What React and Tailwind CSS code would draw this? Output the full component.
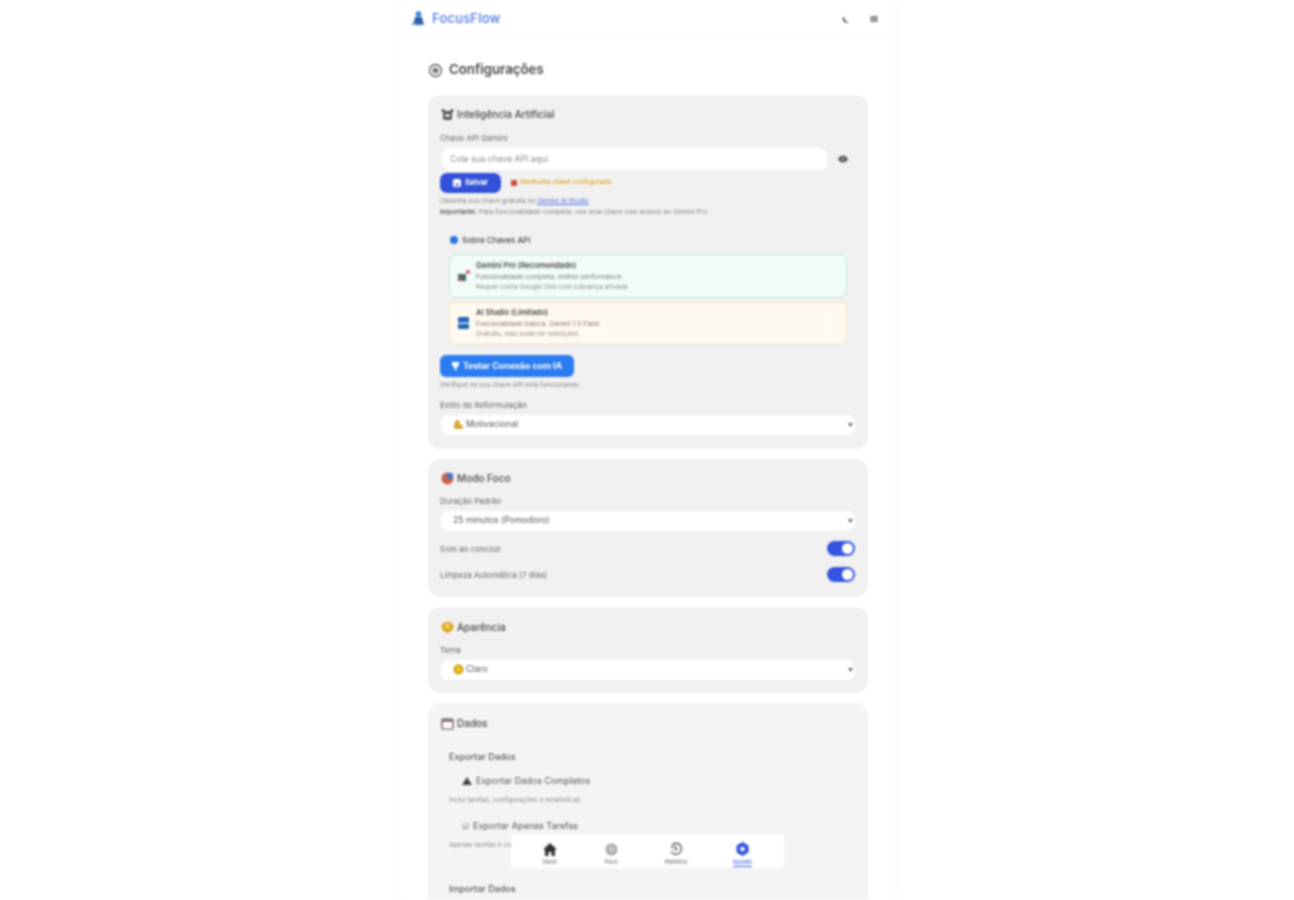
import React from "react";

const Section = ({ className = "", children }) => (
  <section className={`rounded-[12px] pr-[13px] pl-3 ${className}`}>{children}</section>
);

const Heading = ({ icon, children, className = "" }) => (
  <div className={`flex items-center gap-[3px] text-[10px] leading-[14px] font-medium text-[#444] ${className}`}>
    <span className="flex h-[14px] w-[14px] items-center justify-center">{icon}</span>
    {children}
  </div>
);

const Label = ({ children, className = "" }) => (
  <div className={`text-[8px] leading-[10px] text-[#666] ${className}`}>{children}</div>
);

const Select = ({ icon, children, className = "" }) => (
  <div className={`flex h-[20px] items-center justify-between rounded-[8px] bg-white pr-[2px] pl-[12px] text-[8.7px] text-[#555] ${className}`}>
    <span className="flex items-center gap-[2px]">{icon}{children}</span>
    <svg width="5" height="4" viewBox="0 0 5 4"><path d="M0 0h5L2.5 4z" fill="#666" /></svg>
  </div>
);

const Toggle = () => (
  <div className="flex h-[15px] w-[28px] items-center justify-end rounded-full bg-[#3353e0] pr-[2px]">
    <div className="h-[11px] w-[11px] rounded-full bg-white" />
  </div>
);

const InfoCard = ({ icon, title, line1, line2, className }) => (
  <div className={`flex items-center gap-[5px] rounded-[6px] border-[1.5px] pl-[7px] ${className}`}>
    <span className="flex h-[14px] w-[14px] items-center justify-center">{icon}</span>
    <div>
      <div className="text-[7.6px] leading-[11px] font-semibold text-[#444]">{title}</div>
      <div className="mt-[1px] text-[6.6px] leading-[10px] text-[#777]">{line1}</div>
      <div className="text-[6.6px] leading-[10px] text-[#888]">{line2}</div>
    </div>
  </div>
);

const NavItem = ({ icon, label, active }) => (
  <div className="flex flex-col items-center">
    <span className="flex h-[16px] w-[16px] items-center justify-center">{icon}</span>
    <span className={`mt-[1px] text-[5.5px] leading-[8px] ${active ? "border-b border-[#3353e0] text-[#3353e0]" : "text-[#555]"}`}>{label}</span>
  </div>
);

export default function App() {
  return (
    <div className="relative h-screen overflow-hidden bg-white font-['Inter',sans-serif] blur-[0.8px]">
      <div className="mx-auto h-screen w-[498px] rounded-[12px] shadow-[0_0_10px_rgba(0,0,0,0.05)]">
        <header className="flex h-[36px] items-center justify-between border-b border-[#f5f5f5] pt-[2px] pr-[18px] pl-[12px]">
          <div className="flex items-center gap-[7px]">
            <svg width="15" height="16" viewBox="0 0 15 16">
              <circle cx="8.500" cy="3" r="2.800" fill="#2f7fd8" />
              <path d="M5 6h7l1 5 2 3-3-1-1 2-2-2-2 2-1-2-5 1 3-3z" fill="#2a5fa8" />
            </svg>
            <span className="text-[13px] font-medium tracking-[0.2px] text-[#4f78e0]">FocusFlow</span>
          </div>
          <div className="flex items-center gap-[20px]">
            <svg width="8" height="8" viewBox="0 0 8 8"><path d="M2 .5C1 3 3.500 7 7 7.500 4.500 8.500 1 7 1 4 1 2.500 1.500 1 2 .5z" fill="#222" /></svg>
            <svg width="8" height="8" viewBox="0 0 8 8"><rect x=".5" y="1" width="7" height="6" rx="1" fill="#777" /><path d="M.5 4h7M4 1v6" stroke="#ddd" strokeWidth=".7" /></svg>
          </div>
        </header>

        <main className="pt-[24px] pr-[28px] pl-[30px]">
          <div className="flex h-[20px] items-center gap-[6px] text-[13.25px] font-semibold text-[#444]">
            <svg width="15" height="15" viewBox="0 0 15 15"><circle cx="7.500" cy="7.500" r="6" fill="none" stroke="#555" strokeWidth="1.300" /><circle cx="7.500" cy="7.500" r="3" fill="#777" /></svg>
            Configurações
          </div>

          <Section className="mt-[15px] h-[354px] bg-[#f1f1f1] pt-[12px]">
            <Heading icon={<svg width="13" height="13" viewBox="0 0 13 13"><rect x="2" y="3" width="9" height="9" rx="2" fill="#555" /><circle cx="2" cy="2.500" r="1.500" fill="#444" /><circle cx="11" cy="2.500" r="1.500" fill="#444" /><rect x="4" y="6" width="5" height="3" fill="#ddd" /></svg>}>
              Inteligência Artificial
            </Heading>
            <Label className="mt-[12px]">Chave API Gemini</Label>
            <div className="mt-[5px] flex items-center">
              <div className="ml-[2px] flex h-[22px] w-[385px] items-center rounded-[8px] bg-white pl-[8px] text-[8.6px] text-[#8a8a8a]">Cole sua chave API aqui</div>
              <svg className="ml-[11px]" width="10" height="8" viewBox="0 0 10 8"><path d="M0 4c2-4.500 8-4.500 10 0-2 4.500-8 4.500-10 0z" fill="#555" /><circle cx="5" cy="4" r="1.300" fill="#aaa" /></svg>
            </div>
            <div className="mt-[3px] flex items-center gap-[10px]">
              <div className="flex h-[20px] w-[61px] items-center justify-center gap-[4px] rounded-[7px] bg-[#3350d8] text-[7.500px] font-bold text-white">
                <svg width="8" height="8" viewBox="0 0 8 8"><rect width="8" height="8" rx="1.500" fill="#fff" /><rect x="2.500" y="4.500" width="3" height="2" fill="#3350d8" /></svg>
                Salvar
              </div>
              <div className="flex items-center gap-[3px] text-[6.600px] font-medium text-[#e0a020]">
                <span className="h-[6px] w-[6px] bg-[#c8503c]" />
                Nenhuma chave configurada
              </div>
            </div>
            <div className="mt-[3px] text-[6.600px] leading-[11px] text-[#808080]">
              Obtenha sua chave gratuita no <span className="text-[#4f6fe0] underline">Gemini AI Studio</span>
            </div>
            <div className="text-[6.600px] leading-[11px] text-[#808080]">
              <b className="font-semibold text-[#555]">Importante:</b> Para funcionalidade completa, use uma chave com acesso ao Gemini Pro
            </div>

            <div className="mt-[15px] ml-[9px] w-[398px]">
              <div className="flex h-[14px] items-center gap-[4px] text-[8px] font-medium text-[#444]">
                <span className="ml-[1px] h-[8px] w-[8px] rounded-full bg-[#2f74e0]" />
                Sobre Chaves API
              </div>
              <InfoCard
                className="mt-[7px] h-[44px] border-[#bdebde] bg-[#f1fbf8]"
                icon={<svg width="12" height="12" viewBox="0 0 12 12"><rect x="0" y="4" width="8" height="7" fill="#4a6a70" /><rect x="1" y="8" width="3" height="3" fill="#c8503c" /><circle cx="10" cy="2" r="2" fill="#e05060" /></svg>}
                title="Gemini Pro (Recomendado)"
                line1="Funcionalidade completa, melhor performance"
                line2="Requer conta Google One com cobrança ativada"
              />
              <InfoCard
                className="mt-[4px] h-[42px] border-[#fae5bd] bg-[#fff9f0]"
                icon={<svg width="12" height="13" viewBox="0 0 12 13"><rect width="11" height="12" rx="1" fill="#2166b8" /><rect y="5.500" width="11" height="1.500" fill="#d8e8f8" /></svg>}
                title="AI Studio (Limitado)"
                line1="Funcionalidade básica, Gemini 1.5 Flash"
                line2="Gratuito, mas pode ter restrições"
              />
            </div>

            <div className="mt-[11px] flex h-[22px] w-[134px] items-center justify-center gap-[4px] rounded-[6px] bg-[#2a7cf0] text-[8.800px] font-bold text-white">
              <svg width="7" height="8" viewBox="0 0 7 8"><path d="M0 0h7v3L4.500 6v2h-2V6L0 3z" fill="#fff" /></svg>
              Testar Conexão com IA
            </div>
            <div className="mt-[3px] text-[6.600px] leading-[10px] text-[#808080]">Verifique se sua chave API está funcionando</div>
            <Label className="mt-[10px]">Estilo de Reformulação</Label>
            <Select
              className="mt-[5px] ml-[1px]"
              icon={<svg width="11" height="11" viewBox="0 0 11 11"><path d="M3 1h3l1 4 3 2v3H1V6z" fill="#d8a63a" /></svg>}
            >
              Motivacional
            </Select>
          </Section>

          <Section className="mt-[10px] h-[138px] bg-[#f1f1f1] pt-[12px]">
            <Heading icon={<svg width="13" height="13" viewBox="0 0 13 13"><circle cx="6.500" cy="6.500" r="6" fill="#c8604c" /><rect x="6" y="1" width="6" height="6" rx="1" fill="#4a78c0" /></svg>}>
              Modo Foco
            </Heading>
            <Label className="mt-[11px]">Duração Padrão</Label>
            <Select className="mt-[5px] ml-[1px]">25 minutos (Pomodoro)</Select>
            <div className="mt-[10px] flex h-[15px] items-center justify-between"><Label>Som ao concluir</Label><Toggle /></div>
            <div className="mt-[11px] flex h-[15px] items-center justify-between"><Label>Limpeza Automática (7 dias)</Label><Toggle /></div>
          </Section>

          <Section className="mt-[10px] h-[86px] bg-[#f1f1f1] pt-[13px]">
            <Heading icon={<svg width="13" height="13" viewBox="0 0 13 13"><path d="M6.500 1c3.500 0 6 2 6 4.500S9 12 6.500 12 .5 8 .5 5.500 3 1 6.500 1z" fill="#d8a820" /><circle cx="6.500" cy="5" r="2.500" fill="#f0d060" /></svg>}>
              Aparência
            </Heading>
            <Label className="mt-[11px]">Tema</Label>
            <Select
              className="mt-[5px] ml-[1px]"
              icon={<svg width="11" height="11" viewBox="0 0 11 11"><circle cx="5.500" cy="5.500" r="5" fill="#c8a010" /><circle cx="5.500" cy="5.500" r="3" fill="#f0c820" /></svg>}
            >
              Claro
            </Select>
          </Section>

          <Section className="mt-[10px] h-[260px] bg-[#f4f4f4] pt-[13px]">
            <Heading icon={<svg width="13" height="13" viewBox="0 0 13 13"><rect x="1" y="2" width="11" height="10" rx="1" fill="#fff" stroke="#604048" strokeWidth="1.200" /><rect x="1" y="2" width="11" height="3" fill="#907078" /></svg>}>
              Dados
            </Heading>
            <div className="mx-[9px] mt-[10px] border-t border-[#eeeeee] pt-[10px]">
              <div className="text-[9px] leading-[12px] font-medium text-[#555]">Exportar Dados</div>
              <div className="mt-[8px] flex h-[20px] items-center gap-[4px] pl-[13px] text-[9px] text-[#555]">
                <svg width="10" height="8" viewBox="0 0 10 8"><path d="M5 0l5 8H0z" fill="#444" /></svg>
                Exportar Dados Completos
              </div>
              <div className="mt-[4px] text-[6.600px] leading-[10px] text-[#888]">Inclui tarefas, configurações e estatísticas</div>
              <div className="mt-[11px] flex h-[20px] items-center gap-[4px] pl-[13px] text-[9px] text-[#555]">
                <span className="text-[8px]">☑</span>
                Exportar Apenas Tarefas
              </div>
              <div className="mt-[4px] text-[6.600px] leading-[10px] text-[#888]">Apenas tarefas e conclusões</div>
              <div className="mt-[25px] border-t border-[#eeeeee] pt-[7px] text-[9px] leading-[12px] font-medium text-[#555]">Importar Dados</div>
            </div>
          </Section>
        </main>
      </div>

      <nav className="absolute top-[835px] left-[511px] flex h-[33px] w-[273px] justify-between rounded-[3px] bg-white pt-[6px] pr-[32px] pl-[31px]">
        <NavItem label="Início" icon={<svg width="14" height="13" viewBox="0 0 14 13"><path d="M7 0l7 6.500h-2V13H8.500V9h-3v4H2V6.500H0z" fill="#333" /></svg>} />
        <NavItem label="Foco" icon={<svg width="13" height="13" viewBox="0 0 13 13"><circle cx="6.500" cy="6.500" r="6" fill="#aaa" /><circle cx="6.500" cy="6.500" r="3" fill="#ccc" /></svg>} />
        <NavItem label="Histórico" icon={<svg width="14" height="14" viewBox="0 0 14 14"><path d="M3 3a5.500 5.500 0 1 1-1 6" fill="none" stroke="#555" strokeWidth="1.300" /><path d="M5 4l3 3-3 1" fill="none" stroke="#555" strokeWidth="1.200" /><circle cx="3" cy="5" r="1" fill="#444" /></svg>} />
        <NavItem active label="Ajustes" icon={<svg width="13" height="14" viewBox="0 0 13 14"><path d="M6.500 0l6 3.500v7L6.500 14l-6-3.500v-7z" fill="#3353e0" /><circle cx="6.500" cy="7" r="2.300" fill="#fff" /></svg>} />
      </nav>
    </div>
  );
}
